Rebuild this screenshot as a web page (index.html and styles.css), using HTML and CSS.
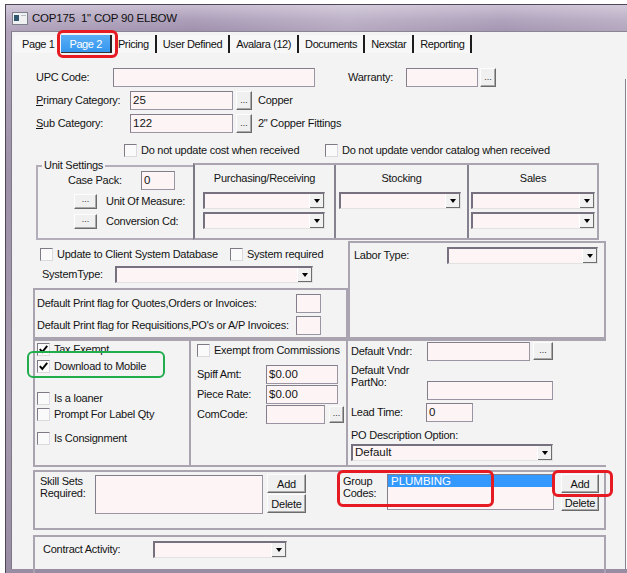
FILE: index.html
```html
<!DOCTYPE html>
<html>
<head>
<meta charset="utf-8">
<title>COP175</title>
<link rel="stylesheet" href="styles.css">
</head>
<body>
<div class="screen">
  <div class="window">
    <div class="titlebar">
      <svg class="appicon" width="16" height="13" viewBox="0 0 16 13"><rect x="0.5" y="0.5" width="15" height="12" fill="#eef0f2" stroke="#7b808a"/><rect x="2" y="3" width="5" height="6" fill="#2f5870"/><rect x="9" y="3" width="5" height="1" fill="#b8bcc4"/></svg>
      <span class="title">COP175&nbsp; 1" COP 90 ELBOW</span>
    </div>
    <div class="client">
      <div class="tabs">
        <div class="tab first">Page 1</div>
        <div class="tab sel">Page 2</div>
        <div class="tab">Pricing</div>
        <div class="tab">User Defined</div>
        <div class="tab">Avalara (12)</div>
        <div class="tab">Documents</div>
        <div class="tab">Nexstar</div>
        <div class="tab">Reporting</div>
      </div>
      <div class="page">
        <div class="main">
          <div class="row r-upc">
            <span class="lbl w77">UPC Code:</span>
            <span class="inp w202"></span>
            <span class="lbl warranty">Warranty:</span>
            <span class="inp w72"></span>
            <span class="btn dots w16 h19">...</span>
          </div>
          <div class="row r-cat">
            <span class="lbl w94"><u>P</u>rimary Category:</span>
            <span class="inp w103">25</span>
            <span class="btn dots w16 h19 ml3">...</span>
            <span class="lbl ml6">Copper</span>
          </div>
          <div class="row r-cat">
            <span class="lbl w94"><u>S</u>ub Category:</span>
            <span class="inp w103">122</span>
            <span class="btn dots w16 h19 ml3">...</span>
            <span class="lbl ml6">2" Copper Fittings</span>
          </div>
          <div class="row r-upd">
            <span class="cbg w201"><span class="chk"></span><span class="cbl">Do not update cost when received</span></span>
            <span class="chk"></span><span class="cbl">Do not update vendor catalog when received</span>
          </div>

          <div class="units">
            <fieldset class="unitset">
              <legend>Unit Settings</legend>
              <div class="row us-case"><span class="lbl w73">Case Pack:</span><span class="inp w34">0</span></div>
              <div class="row us-btn1"><span class="btn dots w23 h15">...</span><span class="lbl ml9">Unit Of Measure:</span></div>
              <div class="row us-btn2"><span class="btn dots w23 h15">...</span><span class="lbl ml9">Conversion Cd:</span></div>
            </fieldset>
            <div class="uom">
              <div class="ucol c1">
                <div class="colhead">Purchasing/Receiving</div>
                <div class="combo w122 cb-first ml8"><span class="val"></span><span class="arr"></span></div>
                <div class="combo w122 cb-next ml8"><span class="val"></span><span class="arr"></span></div>
              </div>
              <div class="ucol c2">
                <div class="colhead">Stocking</div>
                <div class="combo w122 cb-first ml3"><span class="val"></span><span class="arr"></span></div>
              </div>
              <div class="ucol c3">
                <div class="colhead">Sales</div>
                <div class="combo w124 cb-first ml2"><span class="val"></span><span class="arr"></span></div>
                <div class="combo w124 cb-next ml2"><span class="val"></span><span class="arr"></span></div>
              </div>
            </div>
          </div>

          <div class="mid">
            <div class="midleft">
              <div class="row m-cb">
                <span class="cbg w190"><span class="chk"></span><span class="cbl">Update to Client System Database</span></span>
                <span class="chk"></span><span class="cbl">System required</span>
              </div>
              <div class="row m-sys">
                <span class="lbl w73">SystemType:</span>
                <div class="combo w198"><span class="val"></span><span class="arr"></span></div>
              </div>
              <div class="gb printbox">
                <div class="row pf-row"><span class="lbl w259">Default Print flag for Quotes,Orders or Invoices:</span><span class="inp w25 h18"></span></div>
                <div class="row pf-row"><span class="lbl w259">Default Print flag for Requisitions,PO's or A/P Invoices:</span><span class="inp w25 h18"></span></div>
              </div>
            </div>
            <div class="gb labor">
              <div class="row">
                <span class="lbl w93">Labor Type:</span>
                <div class="combo w151"><span class="val"></span><span class="arr"></span></div>
              </div>
            </div>
          </div>

          <div class="lower">
            <div class="lp">
              <div class="row lc lc1"><span class="chk"><svg width="11" height="11" viewBox="0 0 11 11"><path d="M1.8 5.2 L4.3 8 L9.2 1.8" stroke="#000" stroke-width="1.9" fill="none"/></svg></span><span class="cbl">Tax Exempt</span></div>
              <div class="row lc lc2"><span class="chk"><svg width="11" height="11" viewBox="0 0 11 11"><path d="M1.8 5.2 L4.3 8 L9.2 1.8" stroke="#000" stroke-width="1.9" fill="none"/></svg></span><span class="cbl">Download to Mobile</span></div>
              <div class="row lc lc3"><span class="chk"></span><span class="cbl">Is a loaner</span></div>
              <div class="row lc lc4"><span class="chk"></span><span class="cbl">Prompt For Label Qty</span></div>
              <div class="row lc lc5"><span class="chk"></span><span class="cbl">Is Consignment</span></div>
            </div>
            <div class="mp">
              <div class="row mp-cb"><span class="chk"></span><span class="cbl">Exempt from Commissions</span></div>
              <div class="row mp-spiff"><span class="lbl w69">Spiff Amt:</span><span class="inp w72">$0.00</span></div>
              <div class="row mp-next"><span class="lbl w69">Piece Rate:</span><span class="inp w72">$0.00</span></div>
              <div class="row mp-next"><span class="lbl w69">ComCode:</span><span class="inp w59"></span><span class="btn dots w15 h17 ml4">...</span></div>
            </div>
            <div class="rp">
              <div class="row rp-vndr"><span class="lbl w76">Default Vndr:</span><span class="inp w103 h20"></span><span class="btn dots w20 h18 ml3">...</span></div>
              <div class="row rp-part"><span class="lbl w76 twoline">Default Vndr<br>PartNo:</span><span class="inp w126 h18 partinp"></span></div>
              <div class="row rp-lead"><span class="lbl w75">Lead Time:</span><span class="inp w47">0</span></div>
              <div class="row rp-po"><span class="lbl">PO Description Option:</span></div>
              <div class="combo w202 rp-combo"><span class="val">Default</span><span class="arr"></span></div>
            </div>
          </div>

          <div class="gb skill">
            <span class="lbl twoline sk-lbl">Skill Sets<br>Required:</span>
            <span class="inp sk-area"></span>
            <div class="btncol sk-btns">
              <span class="btn w39 h19">Add</span>
              <span class="btn w39 h19 btn2">Delete</span>
            </div>
            <span class="lbl twoline grp-lbl">Group<br>Codes:</span>
            <div class="inp listbox"><div class="listsel">PLUMBING</div></div>
            <div class="btncol grp-btns">
              <span class="btn w38 h19">Add</span>
              <span class="btn w38 h17 btn2">Delete</span>
            </div>
          </div>

          <div class="gb contract">
            <div class="row">
              <span class="lbl w110">Contract Activity:</span>
              <div class="combo w134"><span class="val"></span><span class="arr"></span></div>
            </div>
          </div>
        </div>
        <div class="rail"></div>
      </div>
    </div>
  </div>
  <div class="mark red mk-tab"></div>
  <div class="mark green mk-mobile"></div>
  <div class="mark red mk-group"></div>
  <div class="mark red mk-add"></div>
</div>
</body>
</html>
```

FILE: styles.css
```css
* { box-sizing: border-box; }
html, body { margin: 0; padding: 0; }
body {
  width: 627px; height: 573px; overflow: hidden; background: #ffffff;
  font-family: "Liberation Sans", Arial, sans-serif; font-size: 11px;
  letter-spacing: -0.25px; color: #141414;
}
.screen { position: relative; width: 627px; height: 573px; overflow: hidden; }

.window {
  margin: 4px 0 0 5px; height: 569px;
  border-left: 1px solid #4f4658; border-top: 1px solid #4f4658;
  padding-left: 5px;
  background: linear-gradient(180deg, #b3a6bd 0%, #9d91a8 30%, #a59aae 70%, #978ca2 100%);
}
.titlebar {
  height: 26px; margin-left: -5px; padding-left: 6px;
  display: flex; align-items: center;
  background:
    linear-gradient(90deg, rgba(255,255,255,0.18) 0%, rgba(255,255,255,0) 30%, rgba(255,255,255,0.22) 55%, rgba(255,255,255,0.05) 80%, rgba(255,255,255,0.2) 100%),
    linear-gradient(180deg, #c8bdd1 0%, #ad9fba 55%, #a090ad 100%);
}
.appicon { display: block; flex: none; }
.title { margin-left: 4px; font-size: 11.5px; letter-spacing: -0.2px; color: #101010; }

.client {
  background: #f3f3f3; height: 538px;
  border-left: 1px solid #7e7886; border-top: 1px solid #8a8592;
}
.tabs { height: 23px; display: flex; align-items: flex-start; padding: 3px 0 0 2px; }
.tab {
  height: 18px; line-height: 18px; padding: 0 6px;
  border-right: 2px solid #1c1c1c; background: #f7f7f7;
  letter-spacing: -0.4px; color: #111;
}
.tab.first { padding: 0 6px 0 8px; border-right: 0; margin-right: 1px; }
.tab.sel {
  padding: 0 8px; color: #ffffff; background: linear-gradient(180deg, #5aaef5 0%, #3596ee 100%);
  border-right: 2px solid #222; border-bottom: 1px solid #333;
}

.page { display: flex; height: 514px; }
.main { width: 613px; flex: none; }
.rail { width: 2px; margin-top: 24px; border-left: 1px solid #85808d; background: #fbfbfb; }

.row { display: flex; align-items: center; line-height: 13px; }
.lbl { white-space: nowrap; flex: none; }
.twoline { white-space: nowrap; line-height: 12px; }

.w15 { width: 15px; } .w16 { width: 16px; } .w20 { width: 20px; } .w23 { width: 23px; }
.w25 { width: 25px; } .w34 { width: 34px; } .w38 { width: 38px; } .w39 { width: 39px; }
.w47 { width: 47px; } .w59 { width: 59px; } .w69 { width: 69px; } .w72 { width: 72px; }
.w73 { width: 73px; } .w75 { width: 75px; } .w76 { width: 76px; } .w77 { width: 77px; }
.w93 { width: 93px; } .w94 { width: 94px; } .w103 { width: 103px; } .w110 { width: 110px; }
.w122 { width: 122px; } .w124 { width: 124px; } .w126 { width: 126px; } .w134 { width: 134px; }
.w151 { width: 151px; } .w190 { width: 190px; } .w198 { width: 198px; } .w201 { width: 201px; }
.w202 { width: 202px; } .w259 { width: 259px; }
.h15 { height: 15px; } .h17 { height: 17px; } .h18 { height: 18px; } .h19 { height: 19px; } .h20 { height: 20px; }
.ml2 { margin-left: 2px; } .ml3 { margin-left: 3px; } .ml4 { margin-left: 4px; } .ml6 { margin-left: 6px; }
.ml8 { margin-left: 8px; } .ml9 { margin-left: 9px; }

.inp {
  display: block; flex: none; height: 19px;
  background: #fdf5f5; border: 1px solid #9a94a3; border-top-color: #837d8c; border-left-color: #837d8c;
  padding: 2px 0 0 2px; line-height: 13px; font-size: 11.5px; letter-spacing: 0;
}
.btn {
  display: flex; align-items: center; justify-content: center; flex: none;
  background: #f0f0f0; border: 1px solid; border-color: #fdfdfd #6b6b6b #6b6b6b #fdfdfd;
  box-shadow: inset -1px -1px 0 #a9a9a9; line-height: 12px; color: #111;
}
.dots { align-items: flex-end; padding-bottom: 3px; font-size: 9px; letter-spacing: 0; color: #333; }

.chk {
  display: flex; align-items: center; justify-content: center; flex: none;
  width: 13px; height: 13px; background: #fafafa;
  border: 1px solid; border-color: #7f7a86 #dcdadf #dcdadf #7f7a86;
}
.chk svg { display: block; }
.cbl { margin-left: 4px; white-space: nowrap; }
.cbg { display: flex; align-items: center; flex: none; }

.combo {
  display: flex; flex: none; height: 17px;
  background: #fdf5f5;
  border-style: solid; border-width: 2px 1px 1px 2px;
  border-color: #77717f #e2e2e2 #e2e2e2 #77717f;
}
.combo .val { flex: 1; padding-left: 2px; line-height: 13px; font-size: 11.5px; letter-spacing: 0; }
.combo .arr {
  width: 15px; flex: none; background: #f1f1f1;
  border-left: 1px solid #ffffff; box-shadow: inset -1px -1px 0 #6d6d6d;
  display: flex; align-items: center; justify-content: center;
}
.combo .arr::after {
  content: ""; width: 0; height: 0;
  border-left: 3.5px solid transparent; border-right: 3.5px solid transparent; border-top: 4px solid #000;
}

.gb { border: 2px solid #aaa4b1; }

/* top rows */
.r-upc { margin: 13px 0 0 24px; height: 19px; }
.warranty { margin-left: 33px; width: 58px; }
.r-upc .btn { margin-left: 2px; }
.r-cat { margin: 4px 0 0 24px; height: 19px; }
.r-upd { margin: 11px 0 0 112px; height: 13px; }

/* units */
.units { display: flex; align-items: flex-start; margin: 2px 0 0 24px; height: 81px; }
.unitset {
  margin: 0; padding: 0; min-width: 0; width: 157px; height: 81px;
  border: 2px solid #b4aebb; border-right: none;
}
.unitset legend { margin-left: 4px; padding: 0 2px; line-height: 13px; }
.us-case { margin: -1px 0 0 30px; }
.us-btn1 { margin: 4px 0 0 36px; }
.us-btn2 { margin: 5px 0 0 36px; }
.uom {
  display: flex; width: 406px; height: 77px; margin-top: 4px;
  border: 2px solid #aaa4b1; border-left: 2px solid #7d7885;
}
.ucol { height: 100%; }
.c1 { width: 141px; border-right: 2px solid #86818e; }
.c2 { width: 133px; border-right: 2px solid #86818e; }
.c3 { flex: 1; }
.colhead { height: 26px; line-height: 26px; text-align: center; }
.cb-first { margin-top: 1px; }
.cb-next { margin-top: 3px; }

/* middle */
.mid { display: flex; align-items: flex-start; margin-left: 21px; height: 99px; }
.midleft { width: 315px; flex: none; }
.m-cb { margin: 8px 0 0 7px; height: 13px; }
.m-sys { margin: 5px 0 0 9px; height: 17px; }
.printbox { margin-top: 5px; height: 51px; }
.pf-row { margin: 4px 0 0 2px; height: 18px; }
.labor { width: 258px; height: 98px; margin-top: 1px; padding: 4px 0 0 4px; }

/* lower */
.lower {
  display: flex; margin-left: 21px; width: 573px; height: 128px;
  border: 2px solid #aaa4b1; border-right: none;
}
.lp { width: 156px; border-right: 2px solid #aaa4b1; padding-left: 2px; }
.lc { height: 13px; }
.lc1 { margin-top: 2px; }
.lc2 { margin-top: 4px; }
.lc3 { margin-top: 19px; }
.lc4 { margin-top: 3px; }
.lc5 { margin-top: 11px; }
.mp { width: 157px; border-right: 2px solid #aaa4b1; padding-left: 6px; }
.mp-cb { margin-top: 3px; height: 13px; }
.mp-spiff { margin-top: 8px; height: 19px; }
.mp-next { margin-top: 1px; height: 19px; }
.rp { flex: 1; padding-left: 3px; }
.rp-vndr { height: 20px; }
.rp-part { margin-top: 3px; align-items: flex-start; }
.partinp { margin-top: 17px; }
.rp-lead { margin-top: 3px; height: 19px; }
.rp-po { margin-top: 6px; height: 14px; }
.rp-combo { margin-top: 2px; }

/* skill */
.skill { display: flex; align-items: flex-start; margin: 3px 0 0 21px; width: 573px; height: 60px; }
.sk-lbl { margin: 3px 0 0 5px; width: 55px; }
.sk-area { margin-top: 3px; width: 168px; height: 39px; }
.btncol { display: flex; flex-direction: column; margin-top: 2px; }
.btn2 { margin-top: 1px; }
.sk-btns { margin-left: 4px; }
.grp-lbl { margin: 3px 0 0 37px; width: 44px; }
.listbox { margin-top: 2px; width: 167px; height: 36px; padding: 0; }
.listsel { height: 12px; line-height: 12px; background: #3399ff; color: #ffffff; padding-left: 3px; }
.grp-btns { margin-left: 7px; }

.contract { margin: 5px 0 0 21px; width: 573px; height: 50px; padding: 4px 0 0 8px; }

/* annotation marks */
.mark { position: absolute; border-radius: 6px; }
.red { border: 3px solid #e51a22; }
.green { border: 2.5px solid #22ad4c; }
.mk-tab { left: 57px; top: 30px; width: 61px; height: 28px; }
.mk-mobile { left: 27px; top: 351px; width: 138px; height: 27px; }
.mk-group { left: 337px; top: 470px; width: 157px; height: 37px; }
.mk-add { left: 552px; top: 470px; width: 61px; height: 27px; }
```
